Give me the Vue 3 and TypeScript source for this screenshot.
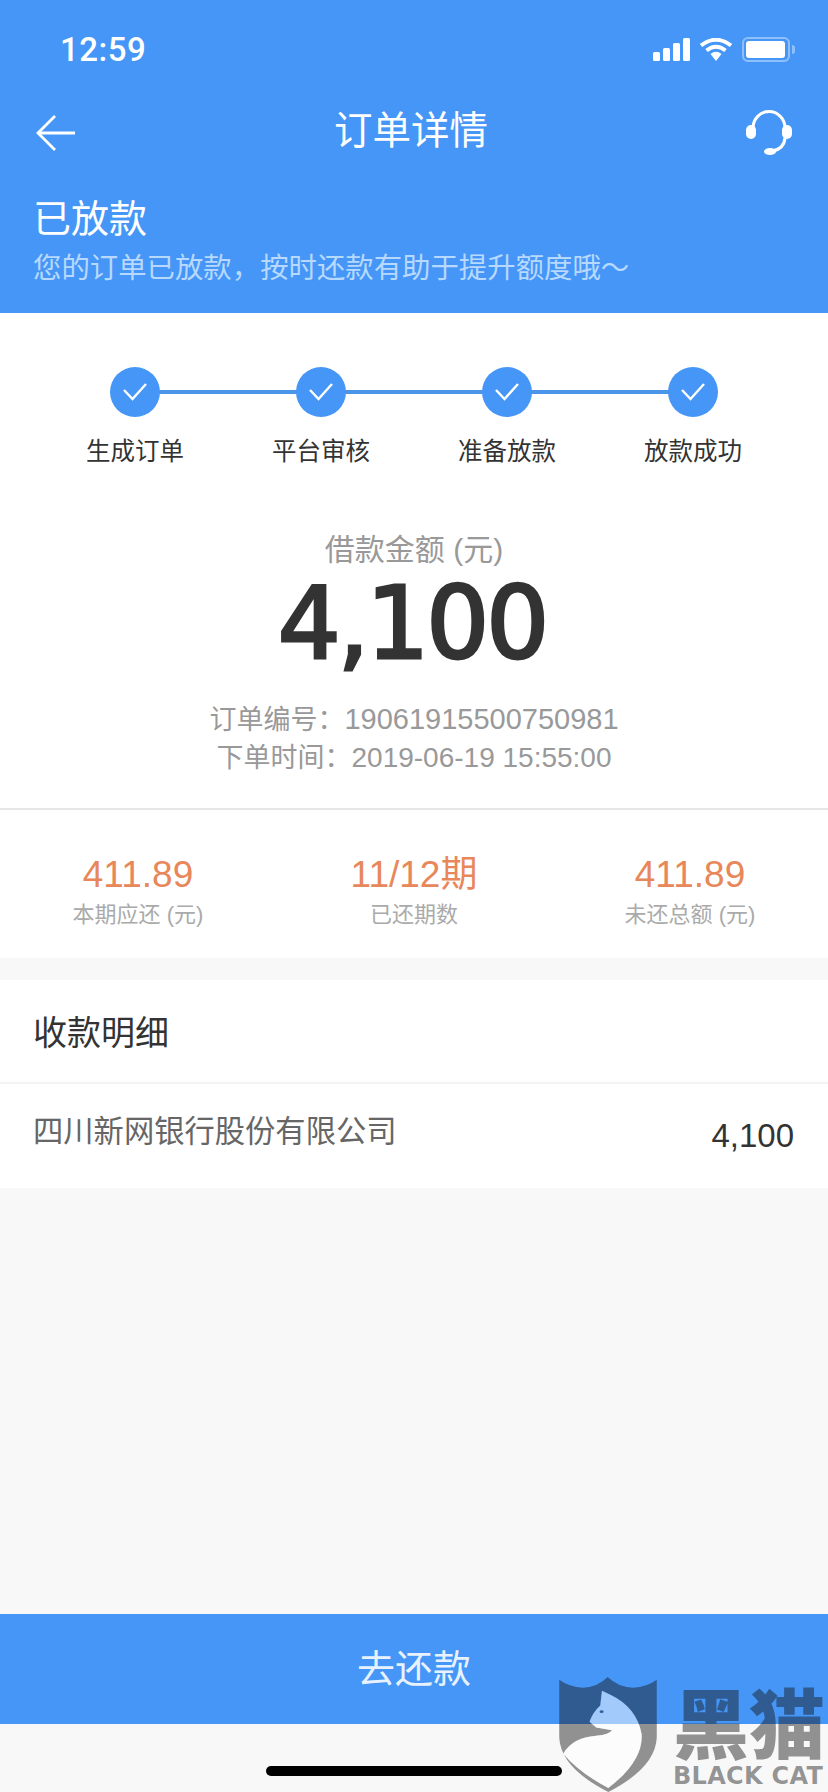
<script setup lang="ts">
interface Stat {
  value: string
  label: string
}

const steps: string[] = ["生成订单", "平台审核", "准备放款", "放款成功"]

const stats: Stat[] = [
  { value: "411.89", label: "本期应还 (元)" },
  { value: "11/12期", label: "已还期数" },
  { value: "411.89", label: "未还总额 (元)" },
]

const signalBars: number[] = [9, 13, 18, 23]
</script>

<template>
  <div class="page">
    <header class="head">
      <div class="status">
        <span class="time">12:59</span>
        <div class="status-icons">
          <div class="signal">
            <i v-for="h in signalBars" :key="h" :style="{ height: h + 'px' }"></i>
          </div>
          <svg class="wifi" width="32" height="23" viewBox="0 0 32 23">
            <path d="M1 7.5 Q16 -4 31 7.5" fill="none" stroke="#fff" stroke-width="4" />
            <path d="M6.5 12.5 Q16 5 25.5 12.5" fill="none" stroke="#fff" stroke-width="4" />
            <path d="M10.5 16 Q16 11.5 21.5 16 L16 23 Z" fill="#fff" />
          </svg>
          <div class="battery"><i></i></div>
          <div class="battery-cap"></div>
        </div>
      </div>

      <nav class="nav">
        <svg width="40" height="36" viewBox="0 0 40 36" fill="none" stroke="#fff" stroke-width="2.8">
          <path d="M19 1 L2 18 L19 35" />
          <path d="M2 18 H39" />
        </svg>
        <h1 class="title">订单详情</h1>
        <svg width="46" height="46" viewBox="0 0 46 46" fill="none" stroke="#fff" stroke-width="3">
          <path d="M7 18 A16 16.5 0 0 1 39 18" />
          <path d="M39 28 Q38 39 26 41" />
          <rect x="0" y="15" width="10" height="14" rx="5" fill="#fff" stroke="none" />
          <rect x="36" y="15" width="10" height="14" rx="5" fill="#fff" stroke="none" />
          <ellipse cx="24" cy="41.5" rx="6" ry="3.6" fill="#fff" stroke="none" />
        </svg>
      </nav>

      <div class="state">
        <div class="state-name">已放款</div>
        <div class="state-tip">您的订单已放款，按时还款有助于提升额度哦～</div>
      </div>
    </header>

    <section class="summary">
      <ol class="steps">
        <li v-for="step in steps" :key="step" class="step">
          <span class="dot">
            <svg width="26" height="20" viewBox="0 0 26 20" fill="none" stroke="#fff" stroke-width="2.4">
              <path d="M2 8 L10.5 17 L24 2" />
            </svg>
          </span>
          <span class="step-label">{{ step }}</span>
        </li>
      </ol>

      <div class="amount-label">借款金额 (元)</div>
      <div class="amount">4,100</div>
      <div class="meta meta-first">订单编号：<span>19061915500750981</span></div>
      <div class="meta meta-date">下单时间：<span>2019-06-19 15:55:00</span></div>
    </section>

    <section class="stats">
      <div v-for="(stat, i) in stats" :key="i" class="stat">
        <div class="stat-value">{{ stat.value }}</div>
        <div class="stat-label">{{ stat.label }}</div>
      </div>
    </section>

    <section class="receipt">
      <h2 class="receipt-title">收款明细</h2>
      <div class="receipt-row">
        <span class="bank">四川新网银行股份有限公司</span>
        <span class="bank-amount">4,100</span>
      </div>
    </section>

    <div class="spacer"></div>

    <button class="pay">去还款</button>
    <div class="home-area"><i class="home-bar"></i></div>

    <!-- brand stamp sits on top of the bottom bar -->
    <div class="stamp">
      <svg class="shield" width="98" height="115" viewBox="0 0 290 342">
        <path
          fill="rgba(20,20,20,.45)"
          fill-rule="evenodd"
          d="M0 8 Q30 30 70 32 Q115 30 144 0 Q175 30 220 32 Q260 30 290 8 L290 180 Q286 270 146 342 Q4 270 0 180 Z
             M127 41 L152 53 Q230 90 245 170 Q250 250 146 330 Q60 285 12 228 Q40 180 110 175 Q150 170 157 158 L110 150 L90 133 Q100 105 122 85 Z"
        />
        <path
          fill="rgba(255,255,255,.5)"
          d="M127 41 L152 53 Q230 90 245 170 Q250 250 146 330 Q60 285 12 228 Q40 180 110 175 Q150 170 157 158 L110 150 L90 133 Q100 105 122 85 Z"
        />
        <ellipse cx="126" cy="103" rx="6" ry="4" fill="#33619f" />
      </svg>
      <div class="stamp-text">
        <div class="stamp-cn">黑猫</div>
        <div class="stamp-en">BLACK CAT</div>
      </div>
    </div>
  </div>
</template>

<style scoped>
.page {
  position: relative;
  width: 828px;
  height: 1792px;
  overflow: hidden;
  display: flex;
  flex-direction: column;
  background: #f8f8f8;
  font-family: "Liberation Sans", "Noto Sans CJK SC", sans-serif;
}

.head {
  height: 313px;
  background: #4596f7;
  color: #fff;
  box-sizing: border-box;
}

.status {
  height: 100px;
  padding: 0 33px 2px 60px;
  box-sizing: border-box;
  display: flex;
  justify-content: space-between;
  align-items: center;
}

.time {
  font-family: Roboto, sans-serif;
  font-weight: 500;
  font-size: 33px;
  letter-spacing: 0.5px;
}

.status-icons {
  display: flex;
  align-items: center;
}

.signal {
  display: flex;
  align-items: flex-end;
  gap: 3px;
  height: 23px;
}

.signal i {
  width: 7px;
  border-radius: 1.5px;
  background: #fff;
}

.wifi {
  margin-left: 10px;
}

.battery {
  margin-left: 10px;
  width: 48px;
  height: 25px;
  box-sizing: border-box;
  border: 2px solid #8fc0fb;
  border-radius: 6px;
  padding: 2px;
}

.battery i {
  display: block;
  width: 39px;
  height: 17px;
  border-radius: 3px;
  background: #fff;
}

.battery-cap {
  width: 3px;
  height: 9px;
  margin-left: 2px;
  border-radius: 0 3px 3px 0;
  background: #8fc0fb;
}

.nav {
  height: 65px;
  padding: 0 36px;
  display: flex;
  justify-content: space-between;
  align-items: center;
}

.title {
  margin: 0 0 11px;
  font-size: 38.5px;
  font-weight: 400;
}

.state {
  padding: 27px 33px 0;
}

.state-name {
  font-size: 38px;
  line-height: 54px;
}

.state-tip {
  font-size: 28.4px;
  line-height: 44px;
  color: #b8d9ff;
  white-space: nowrap;
}

.summary {
  height: 497px;
  box-sizing: border-box;
  background: #fff;
  border-bottom: 2px solid #e6e6e6;
  text-align: center;
}

.steps {
  list-style: none;
  margin: 0;
  padding: 54px 0 0 42px;
  display: grid;
  grid-template-columns: repeat(4, 186px);
}

.step {
  position: relative;
  display: flex;
  flex-direction: column;
  align-items: center;
}

.step:not(:last-child)::after {
  content: "";
  position: absolute;
  left: 50%;
  top: 23px;
  width: 186px;
  height: 4px;
  background: #4a94ea;
}

.dot {
  position: relative;
  z-index: 1;
  width: 50px;
  height: 50px;
  border-radius: 50%;
  background: #4596f7;
  display: flex;
  align-items: center;
  justify-content: center;
}

.step-label {
  margin-top: 17px;
  font-size: 24.5px;
  line-height: 36px;
  color: #333;
}

.amount-label {
  margin-top: 60px;
  font-size: 30px;
  line-height: 40px;
  color: #999;
}

.amount {
  margin-top: 2px;
  padding-right: 4px;
  font-family: "DejaVu Sans", sans-serif;
  font-size: 99px;
  line-height: 104px;
  color: #333;
  letter-spacing: -3px;
  -webkit-text-stroke: 3px #333;
}

.meta {
  font-size: 27px;
  line-height: 37px;
  color: #999;
}

.meta span {
  font-size: 29px;
}

.meta-date span {
  font-size: 28px;
}

.meta-first {
  margin-top: 25px;
}

.stats {
  height: 148px;
  box-sizing: border-box;
  padding-top: 16px;
  background: #fff;
  display: grid;
  grid-template-columns: repeat(3, 1fr);
  align-content: center;
  text-align: center;
}

.stat-value {
  font-size: 37px;
  line-height: 44px;
  color: #e8875a;
}

.stat-label {
  margin-top: 2px;
  font-size: 22px;
  line-height: 32px;
  color: #aaa;
}

.receipt {
  margin-top: 22px;
  background: #fff;
}

.receipt-title {
  margin: 0;
  height: 102px;
  padding: 0 33px;
  font-size: 34px;
  font-weight: 400;
  line-height: 106px;
  color: #333;
  border-bottom: 2px solid #f3f3f3;
}

.receipt-row {
  height: 104px;
  padding: 0 34px 0 33px;
  display: flex;
  justify-content: space-between;
  align-items: center;
}

.bank {
  margin-top: -14px;
  font-size: 30.3px;
  color: #666;
}

.bank-amount {
  font-family: "Liberation Sans", sans-serif;
  font-size: 33px;
  color: #333;
}

.spacer {
  flex: 1;
}

.pay {
  height: 110px;
  border: 0;
  padding: 0 0 8px;
  background: #4596f7;
  color: #e8f2ff;
  font-family: inherit;
  font-size: 38px;
}

.home-area {
  height: 68px;
  display: flex;
  justify-content: center;
  align-items: flex-start;
  padding: 42px 0 0 0;
  box-sizing: border-box;
}

.home-bar {
  display: block;
  width: 296px;
  height: 10px;
  border-radius: 5px;
  background: #000;
}

.stamp {
  position: absolute;
  left: 559px;
  top: 1677px;
  display: flex;
  gap: 16px;
}

.stamp-text {
  width: 156px;
  color: rgba(20, 20, 20, 0.45);
  white-space: nowrap;
}

.stamp-cn {
  margin-top: 5px;
  font-family: "Noto Sans CJK SC", sans-serif;
  font-size: 76px;
  font-weight: 900;
  line-height: 76px;
}

.stamp-en {
  margin-top: 6px;
  font-family: "DejaVu Sans", sans-serif;
  font-size: 24px;
  font-weight: 700;
  line-height: 24px;
  letter-spacing: 0.3px;
}
</style>
